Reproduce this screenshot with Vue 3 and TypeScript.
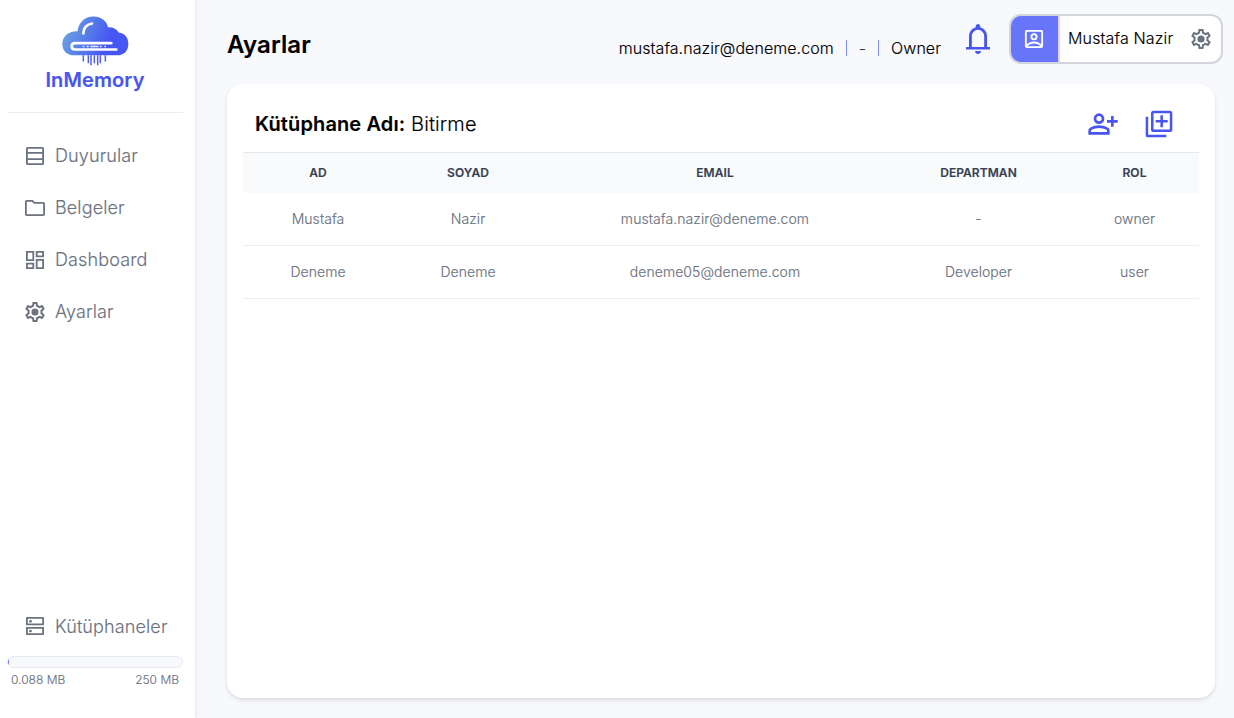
<script setup lang="ts">
interface NavItem {
  label: string
  icon: string
}

interface Member {
  name: string
  surname: string
  email: string
  department: string
  role: string
}

const gear =
  'M19.43 12.98c.04-.32.07-.64.07-.98 0-.34-.03-.66-.07-.98l2.11-1.65c.19-.15.24-.42.12-.64l-2-3.46c-.09-.16-.26-.25-.44-.25-.06 0-.12.01-.17.03l-2.49 1c-.52-.4-1.08-.73-1.69-.98l-.38-2.65C14.46 2.18 14.25 2 14 2h-4c-.25 0-.46.18-.49.42l-.38 2.65c-.61.25-1.17.59-1.69.98l-2.49-1c-.06-.02-.12-.03-.18-.03-.17 0-.34.09-.43.25l-2 3.46c-.13.22-.07.49.12.64l2.11 1.65c-.04.32-.07.65-.07.98 0 .33.03.66.07.98l-2.11 1.65c-.19.15-.24.42-.12.64l2 3.46c.09.16.26.25.44.25.06 0 .12-.01.17-.03l2.49-1c.52.4 1.08.73 1.69.98l.38 2.65c.03.24.24.42.49.42h4c.25 0 .46-.18.49-.42l.38-2.65c.61-.25 1.17-.59 1.69-.98l2.49 1c.06.02.12.03.18.03.17 0 .34-.09.43-.25l2-3.46c.12-.22.07-.49-.12-.64l-2.11-1.65zm-1.98-1.71c.04.31.05.52.05.73 0 .21-.02.43-.05.73l-.14 1.13.89.7 1.08.84-.7 1.21-1.27-.51-1.04-.42-.9.68c-.43.32-.84.56-1.25.73l-1.06.43-.16 1.13-.2 1.35h-1.4l-.19-1.35-.16-1.13-1.06-.43c-.43-.18-.83-.41-1.23-.71l-.91-.7-1.06.43-1.27.51-.7-1.21 1.08-.84.89-.7-.14-1.13c-.03-.31-.05-.54-.05-.74s.02-.43.05-.73l.14-1.13-.89-.7-1.08-.84.7-1.21 1.27.51 1.04.42.9-.68c.43-.32.84-.56 1.25-.73l1.06-.43.16-1.13.2-1.35h1.39l.19 1.35.16 1.13 1.06.43c.43.18.83.41 1.23.71l.91.7 1.06-.43 1.27-.51.7 1.21-1.07.85-.89.7.14 1.13z M12 8.4a3.6 3.6 0 1 0 0 7.2a3.6 3.6 0 1 0 0-7.2z'

const nav: NavItem[] = [
  {
    label: 'Duyurular',
    icon: 'M4.5 3h15A1.5 1.5 0 0 1 21 4.500v15a1.5 1.500 0 0 1-1.500 1.500h-15A1.500 1.500 0 0 1 3 19.500v-15A1.500 1.500 0 0 1 4.500 3zM4.800 4.800V8.100h14.400V4.800zM4.800 9.700v4.600h14.400V9.700zM4.800 15.900v3.300h14.400v-3.300z',
  },
  {
    label: 'Belgeler',
    icon: 'M3.800 20A1.800 1.800 0 0 1 2 18.200V5.800A1.800 1.800 0 0 1 3.800 4h5.900l2 2h8.500A1.800 1.800 0 0 1 22 7.800v10.400a1.800 1.800 0 0 1-1.800 1.800zM3.800 5.700v12.500h16.400V7.800h-9.300l-2-2.100z',
  },
  {
    label: 'Dashboard',
    icon: 'M3 3h8.200v10H3zM4.800 4.800v6.400h4.600V4.800zM12.800 3H21v6.200h-8.200zM14.600 4.800v2.600h4.600V4.800zM12.800 11H21v10h-8.200zM14.600 12.800v6.400h4.600v-6.400zM3 14.800h8.200V21H3zM4.800 16.600v2.600h4.600v-2.600z',
  },
  { label: 'Ayarlar', icon: gear },
]

const libraryIcon =
  'M4 3h16a1 1 0 0 1 1 1v7.200H3V4a1 1 0 0 1 1-1zM4.800 4.800v4.600h14.400V4.800zM3 12.900h18V20a1 1 0 0 1-1 1H4a1 1 0 0 1-1-1zM4.800 14.700v4.500h14.400v-4.500z'

const bell =
  'M160-200v-70h80v-290q0-83 50-147.500T420-792v-28q0-25 17.500-42.500T480-880q25 0 42.500 17.500T540-820v28q80 20 130 84.500T720-560v290h80v70H160ZM480-80q-33 0-56.500-23.500T400-160h160q0 33-23.500 56.500T480-80ZM315-270h330v-290q0-68-48.500-116.500T480-725q-68 0-116.500 48.500T315-560v290Z'

const personAdd =
  'M720-400v-120H600v-80h120v-120h80v120h120v80H800v120h-80Zm-360-80q-66 0-113-47t-47-113q0-66 47-113t113-47q66 0 113 47t47 113q0 66-47 113t-113 47ZM40-160v-112q0-34 17.500-62.500T104-378q62-31 126-46.500T360-440q66 0 130 15.500T616-378q29 15 46.500 43.500T680-272v112H40Zm80-80h480v-32q0-11-5.500-20T580-306q-54-27-109-40.500T360-360q-56 0-111 13.500T140-306q-9 5-14.500 14t-5.500 20v32Zm240-320q33 0 56.500-23.500T440-640q0-33-23.500-56.500T360-720q-33 0-56.500 23.500T280-640q0 33 23.500 56.500T360-560Z'

const columns: string[] = ['AD', 'SOYAD', 'EMAIL', 'DEPARTMAN', 'ROL']

const members: Member[] = [
  { name: 'Mustafa', surname: 'Nazir', email: 'mustafa.nazir@deneme.com', department: '-', role: 'owner' },
  { name: 'Deneme', surname: 'Deneme', email: 'deneme05@deneme.com', department: 'Developer', role: 'user' },
]

const used = 0.088
const quota = 250
</script>

<template>
  <div class="app">
    <aside class="sidebar">
      <div class="brand">
        <svg class="logo" viewBox="185 46.500 198 147">
          <defs>
            <linearGradient id="cloud" gradientUnits="userSpaceOnUse" x1="190" y1="90" x2="316" y2="142">
              <stop offset="0" stop-color="#68a4e0" />
              <stop offset="1" stop-color="#4656f2" />
            </linearGradient>
          </defs>
          <path
            fill="url(#cloud)"
            d="M214 164C196 161 186 148 186 130C186 107 205 91 232 92C234 66 254 48 279 48C302 48 319 61 323 80C338 79 349 85 355 96C374 98 384 112 384 130C384 149 374 161 358 164Z"
          />
          <path d="M249 99C249 82 259 72 275 69" fill="none" stroke="#fff" stroke-width="8" stroke-linecap="round" />
          <path d="M333 128H224Q214 128 214 137.500T224 147H348" fill="none" stroke="#fff" stroke-width="8" stroke-linecap="round" />
          <path d="M247 138h5M259 138h6M270 138h25M299 138h5M312 138h5" fill="none" stroke="#e3e9ff" stroke-width="5" />
          <path d="M249 164v19M264 164v24M272 164v30M282 164v24M292 164v30M300 164v24M315 164v19" fill="none" stroke="#4f5fe9" stroke-width="4.500" />
        </svg>
        <span class="brand-name">InMemory</span>
      </div>
      <nav class="nav">
        <a v-for="item in nav" :key="item.label" class="nav-item">
          <svg class="icon" viewBox="0 0 24 24"><path :d="item.icon" fill-rule="evenodd" /></svg>
          <span>{{ item.label }}</span>
        </a>
      </nav>
      <div class="storage">
        <a class="nav-item">
          <svg class="icon" viewBox="0 0 24 24">
            <path :d="libraryIcon" fill-rule="evenodd" />
            <circle cx="7.500" cy="7.300" r="1.400" />
            <circle cx="7.500" cy="17.100" r="1.400" />
          </svg>
          <span>Kütüphaneler</span>
        </a>
        <div class="meter"><div class="meter-fill" :style="{ width: Math.max(0.6, (used / quota) * 100) + '%' }"></div></div>
        <div class="meter-labels"><span>{{ used }} MB</span><span>{{ quota }} MB</span></div>
      </div>
    </aside>

    <main class="main">
      <header class="header">
        <h1 class="title">Ayarlar</h1>
        <div class="account">
          <span>mustafa.nazir@deneme.com</span>
          <i class="bar"></i>
          <span class="dash">-</span>
          <i class="bar"></i>
          <span>Owner</span>
        </div>
        <svg class="bell" viewBox="0 -960 960 960"><path :d="bell" /></svg>
        <div class="profile">
          <div class="avatar">
            <svg class="icon" viewBox="0 0 24 24" fill="none">
              <rect x="3.850" y="3.850" width="16.300" height="16.300" rx="0.900" />
              <circle cx="12" cy="9.700" r="2.600" />
              <path d="M4.500 19C6.500 16.600 9 15.500 12 15.500s5.500 1.100 7.500 3.500" />
            </svg>
          </div>
          <span class="profile-name">Mustafa Nazir</span>
          <svg class="icon" viewBox="0 0 24 24"><path :d="gear" fill-rule="evenodd" /></svg>
        </div>
      </header>

      <section class="card">
        <div class="card-head">
          <p class="library"><b>Kütüphane Adı:</b> Bitirme</p>
          <div class="actions">
            <svg class="action" viewBox="0 -960 960 960"><path :d="personAdd" /></svg>
            <svg class="action line" viewBox="0 0 24 24">
              <rect x="6.950" y="2.950" width="14.100" height="14.100" rx="1" />
              <path d="M2.950 6.500V20.050a1 1 0 0 0 1 1H17.500M14 5.500v9M9.500 10h9" />
            </svg>
          </div>
        </div>
        <table class="table">
          <colgroup>
            <col class="c-name" /><col class="c-name" /><col class="c-email" /><col class="c-dept" /><col />
          </colgroup>
          <thead>
            <tr><th v-for="c in columns" :key="c">{{ c }}</th></tr>
          </thead>
          <tbody>
            <tr v-for="m in members" :key="m.email">
              <td>{{ m.name }}</td>
              <td>{{ m.surname }}</td>
              <td>{{ m.email }}</td>
              <td>{{ m.department }}</td>
              <td>{{ m.role }}</td>
            </tr>
          </tbody>
        </table>
      </section>
    </main>
  </div>
</template>

<style>
body {
  margin: 0;
  overflow: hidden;
}
</style>

<style scoped>
* {
  box-sizing: border-box;
}
.app {
  display: flex;
  height: 718px;
  background: #f8f9fd;
  font-family: Inter, sans-serif;
  font-weight: 300;
  color: #000;
  -webkit-text-stroke: 0.15px currentColor;
}
.sidebar {
  display: flex;
  flex-direction: column;
  width: 195px;
  flex: none;
  padding: 0 12px 0 7px;
  background: #fff;
  box-shadow: 0 0 5px rgba(0, 0, 0, 0.12);
}
.brand {
  display: flex;
  flex-direction: column;
  align-items: center;
  height: 113px;
  padding-top: 16px;
  border-bottom: 1px solid #ececee;
}
.logo {
  width: 66px;
  height: 49px;
  overflow: visible;
}
.brand-name {
  margin-top: 1px;
  font-size: 20px;
  line-height: 28px;
  font-weight: 600;
  letter-spacing: 0.1px;
  color: #4855f0;
}
.nav {
  display: flex;
  flex-direction: column;
  padding-top: 17px;
}
.nav-item {
  display: flex;
  align-items: center;
  gap: 8px;
  height: 52px;
  padding-left: 16px;
  font-size: 18px;
  letter-spacing: 0.12px;
  color: #6b7280;
}
.nav .nav-item {
  padding-bottom: 1px;
}
.icon {
  width: 24px;
  height: 24px;
  flex: none;
  fill: #6b7280;
}
.storage {
  margin-top: auto;
  padding-bottom: 30px;
}
.meter {
  height: 12px;
  margin-top: 4px;
  border: 1px solid #e9eaf2;
  border-radius: 6px;
  background: #f8f9fd;
  overflow: hidden;
}
.meter-fill {
  height: 100%;
  background: #6876fb;
}
.meter-labels {
  display: flex;
  justify-content: space-between;
  padding: 4px 4px 0;
  font-size: 12px;
  line-height: 16px;
  color: #6b7280;
}
.main {
  flex: 1;
  padding: 14px 19px 20px 32px;
}
.header {
  display: flex;
  height: 50px;
  margin-right: -8px;
}
.title {
  margin: 0;
  font-size: 24px;
  line-height: 62px;
  font-weight: 600;
  letter-spacing: 0.12px;
}
.account {
  display: flex;
  align-items: center;
  margin-left: auto;
  padding-top: 18px;
  font-size: 16px;
  letter-spacing: 0.06px;
}
.bar {
  width: 1px;
  height: 16px;
  margin: 0 12px;
  background: #8591fa;
}
.dash {
  color: #333;
}
.bell {
  width: 36px;
  height: 36px;
  margin: 7px 13px 0 19px;
  fill: #4855f0;
}
.profile {
  display: flex;
  align-items: center;
  width: 214px;
  height: 50px;
  border: 2px solid #d1d5db;
  border-radius: 12px;
  background: #fff;
  overflow: hidden;
}
.avatar {
  display: flex;
  align-items: center;
  justify-content: center;
  width: 49px;
  height: 100%;
  padding-right: 1px;
  border-right: 2px solid #e0d4fd;
  background: #6775fb;
}
.avatar .icon {
  fill: none;
  stroke: #fff;
  stroke-width: 1.850;
}
.profile-name {
  margin-left: 8px;
  margin-right: auto;
  padding-bottom: 2px;
  font-size: 16px;
  letter-spacing: 0.15px;
}
.profile > .icon {
  margin-right: 8px;
}
.card {
  height: 614px;
  margin-top: 20px;
  padding: 0 16px;
  border-radius: 16px;
  background: #fff;
  box-shadow: 0 2px 4px rgba(0, 0, 0, 0.12);
}
.card-head {
  display: flex;
  align-items: center;
  justify-content: space-between;
  height: 68px;
  padding: 12px 24px 0 12px;
}
.library {
  margin: 0;
  font-size: 20px;
  letter-spacing: 0.12px;
}
.library b {
  font-weight: 600;
}
.actions {
  display: flex;
  gap: 24px;
}
.action {
  width: 32px;
  height: 32px;
  fill: #4855f0;
}
.line {
  fill: none;
  stroke: #4855f0;
  stroke-width: 1.900;
}
.table {
  width: 956px;
  table-layout: fixed;
  border-collapse: separate;
  border-spacing: 0;
  text-align: center;
}
.c-name {
  width: 150px;
}
.c-email {
  width: 344px;
}
.c-dept {
  width: 183px;
}
th {
  height: 41px;
  padding: 0 0 2px;
  border-top: 1px solid #e5e7eb;
  background: #f9fafb;
  font-size: 12px;
  font-weight: 600;
  letter-spacing: 0.06px;
  color: #374151;
}
td {
  height: 53px;
  padding: 0 0 2px;
  border-bottom: 1px solid #edeef1;
  font-size: 14px;
  letter-spacing: 0.06px;
  color: #6b7280;
}
</style>
